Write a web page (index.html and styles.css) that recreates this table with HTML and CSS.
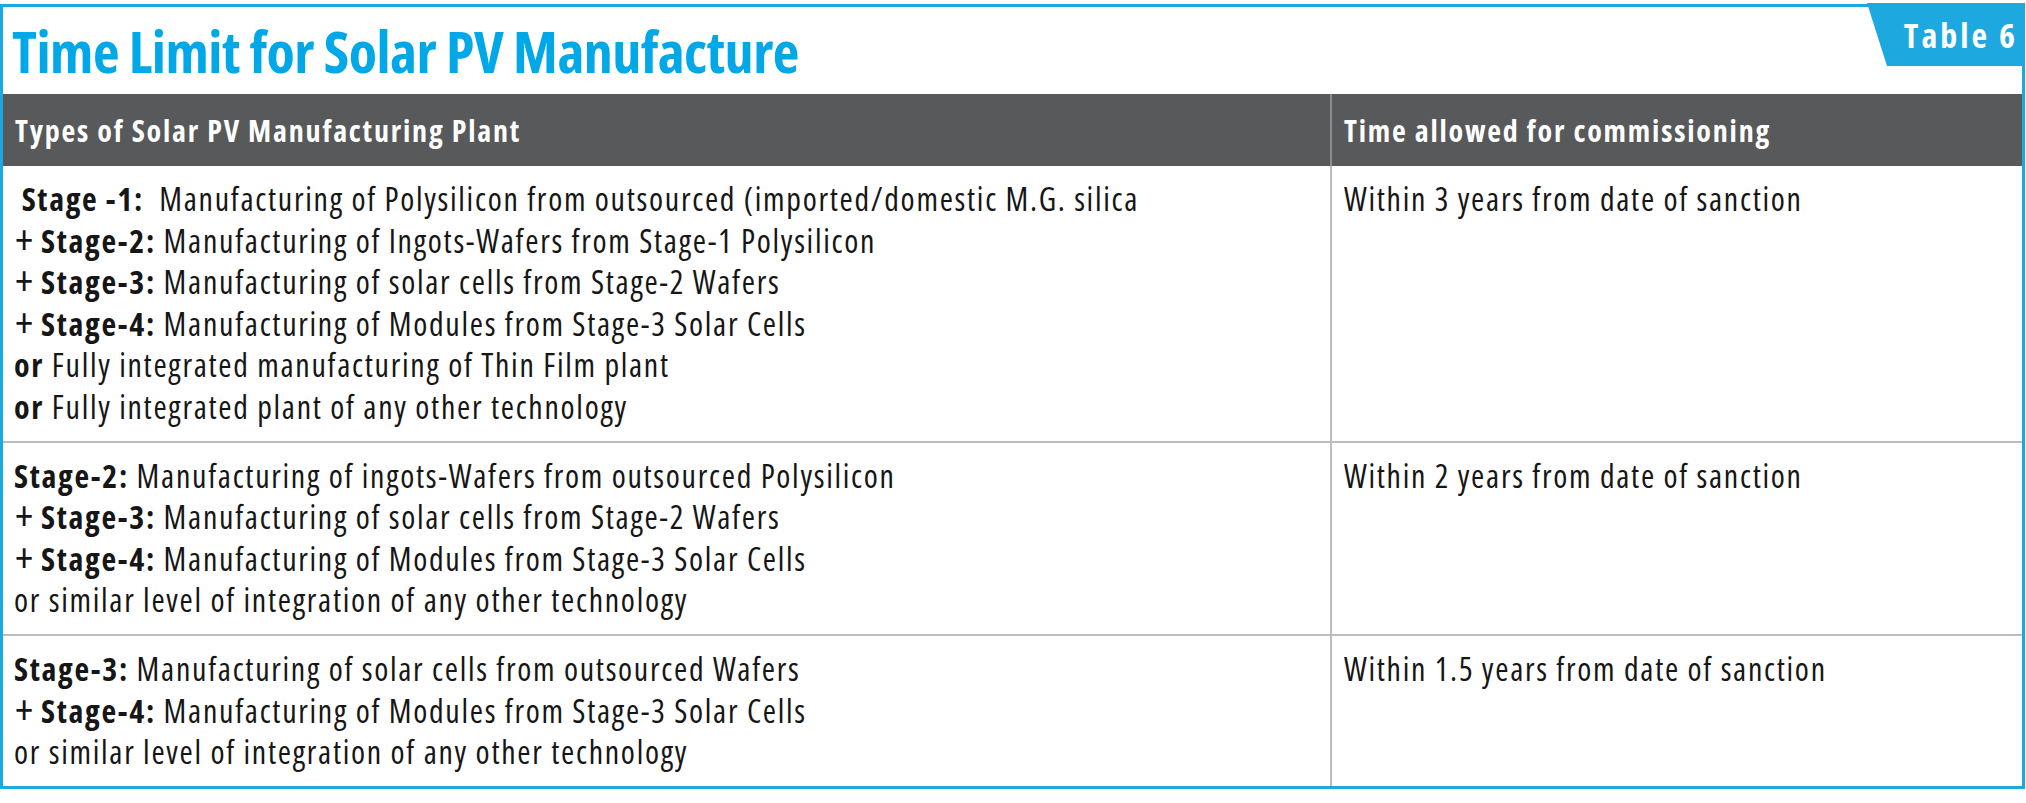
FILE: index.html
```html
<!DOCTYPE html>
<html lang="en">
<head>
<meta charset="utf-8">
<title>Time Limit for Solar PV Manufacture</title>
<link rel="stylesheet" href="styles.css">
</head>
<body>
<section class="panel">
  <div class="badge"><span>Table 6</span></div>
  <header class="title-bar">
    <h1 class="title">Time Limit for Solar PV Manufacture</h1>
  </header>
  <div class="grid">
    <div class="cell head">Types of Solar PV Manufacturing Plant</div>
    <div class="cell head right">Time allowed for commissioning</div>

    <div class="cell row">
      <div class="line">&nbsp;<b>Stage -1:</b>&nbsp; Manufacturing of Polysilicon from outsourced (imported/domestic M.G. silica</div>
      <div class="line"><span class="plus">+</span><b>Stage-2:</b> Manufacturing of Ingots-Wafers from Stage-1 Polysilicon</div>
      <div class="line"><span class="plus">+</span><b>Stage-3:</b> Manufacturing of solar cells from Stage-2 Wafers</div>
      <div class="line"><span class="plus">+</span><b>Stage-4:</b> Manufacturing of Modules from Stage-3 Solar Cells</div>
      <div class="line"><b>or</b> Fully integrated manufacturing of Thin Film plant</div>
      <div class="line"><b>or</b> Fully integrated plant of any other technology</div>
    </div>
    <div class="cell row right">
      <div class="line">Within 3 years from date of sanction</div>
    </div>

    <div class="cell row sep">
      <div class="line"><b>Stage-2:</b> Manufacturing of ingots-Wafers from outsourced Polysilicon</div>
      <div class="line"><span class="plus">+</span><b>Stage-3:</b> Manufacturing of solar cells from Stage-2 Wafers</div>
      <div class="line"><span class="plus">+</span><b>Stage-4:</b> Manufacturing of Modules from Stage-3 Solar Cells</div>
      <div class="line">or similar level of integration of any other technology</div>
    </div>
    <div class="cell row right sep">
      <div class="line">Within 2 years from date of sanction</div>
    </div>

    <div class="cell row sep">
      <div class="line"><b>Stage-3:</b> Manufacturing of solar cells from outsourced Wafers</div>
      <div class="line"><span class="plus">+</span><b>Stage-4:</b> Manufacturing of Modules from Stage-3 Solar Cells</div>
      <div class="line">or similar level of integration of any other technology</div>
    </div>
    <div class="cell row right sep">
      <div class="line">Within 1.5 years from date of sanction</div>
    </div>
  </div>
</section>
</body>
</html>
```
FILE: styles.css
```css
html, body {
  margin: 0;
  padding: 0;
  background: #ffffff;
}

body {
  font-family: "Open Sans", "DejaVu Sans Condensed", sans-serif;
  font-stretch: 75%;
  color: #161616;
}

.panel {
  position: relative;
  box-sizing: border-box;
  width: 2025px;
  margin-top: 4px;
  border: 3px solid #1ea8e0;
}

.title-bar {
  height: 87px;
  display: flex;
  align-items: center;
  padding-left: 9px;
}

.title {
  margin: 0;
  font-size: 58px;
  font-weight: 700;
  letter-spacing: -0.5px;
  color: #00a8e8;
  line-height: 1;
}

.badge {
  position: absolute;
  top: -4px;
  right: -3px;
  width: 158px;
  height: 63px;
  background: #1ea8e0;
  clip-path: polygon(0 0, 100% 0, 100% 100%, 20px 100%);
  display: flex;
  align-items: center;
  justify-content: flex-end;
  padding-right: 7px;
  box-sizing: border-box;
}

.badge span {
  color: #ffffff;
  font-size: 34px;
  font-weight: 700;
  letter-spacing: 3px;
  line-height: 1;
}

.grid {
  display: grid;
  grid-template-columns: 1327px 1fr;
}

.cell.right {
  border-left: 2px solid #bdbdbd;
}

.head {
  height: 72px;
  background: #58595b;
  color: #ffffff;
  font-size: 30px;
  font-weight: 700;
  letter-spacing: 1.8px;
  display: flex;
  align-items: center;
  padding-left: 12px;
}

.head.right {
  border-left-color: #8c8d8f;
  padding-left: 12px;
}

.row {
  font-size: 32px;
  line-height: 41.6px;
  letter-spacing: 1.7px;
  padding: 12px 12px 13px 11px;
}

.row.right {
  padding-left: 12px;
}

.sep {
  border-top: 2px solid #bdbdbd;
}

.line {
  white-space: nowrap;
}

.line b {
  font-weight: 700;
}

.plus {
  display: inline-block;
  width: 27px;
  padding-left: 1px;
  box-sizing: border-box;
  font-weight: 400;
  letter-spacing: 0;
  transform: scale(1.3);
  transform-origin: 0 60%;
}
```
